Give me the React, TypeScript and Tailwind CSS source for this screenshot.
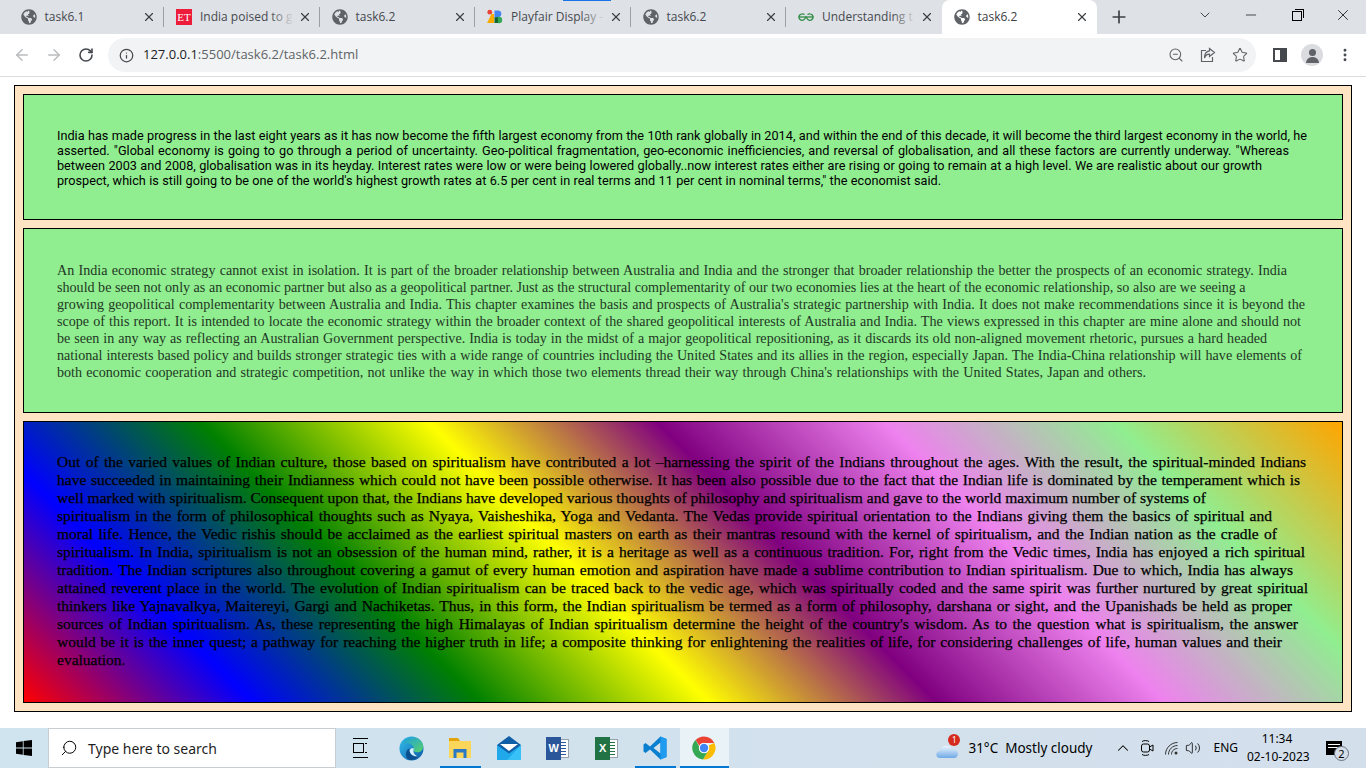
import { FaGlobeAmericas } from "react-icons/fa"
import {
  ArrowLeft,
  ArrowRight,
  ChevronDown,
  ChevronUp,
  Info,
  Minus,
  MoreVertical,
  Plus,
  RotateCw,
  Search,
  Star,
  Volume2,
  X,
  ZoomOut,
} from "lucide-react"

// each line keeps the width it has in the page so the breaks and word positions hold
const first = [
  { w: "w-[1250px]", text: "India has made progress in the last eight years as it has now become the fifth largest economy from the 10th rank globally in 2014, and within the end of this decade, it will become the third largest economy in the world, he" },
  { w: "w-[1232px]", text: "asserted. \"Global economy is going to go through a period of uncertainty. Geo-political fragmentation, geo-economic inefficiencies, and reversal of globalisation, and all these factors are currently underway. \"Whereas" },
  { w: "w-[1205px]", text: "between 2003 and 2008, globalisation was in its heyday. Interest rates were low or were being lowered globally..now interest rates either are rising or going to remain at a high level. We are realistic about our growth" },
  { w: "w-[884px]", text: "prospect, which is still going to be one of the world's highest growth rates at 6.5 per cent in real terms and 11 per cent in nominal terms,\" the economist said." },
]

const second = [
  { w: "w-[1230px]", text: "An India economic strategy cannot exist in isolation. It is part of the broader relationship between Australia and India and the stronger that broader relationship the better the prospects of an economic strategy. India" },
  { w: "w-[1181px]", text: "should be seen not only as an economic partner but also as a geopolitical partner. Just as the structural complementarity of our two economies lies at the heart of the economic relationship, so also are we seeing a" },
  { w: "w-[1248px]", text: "growing geopolitical complementarity between Australia and India. This chapter examines the basis and prospects of Australia's strategic partnership with India. It does not make recommendations since it is beyond the" },
  { w: "w-[1244px]", text: "scope of this report. It is intended to locate the economic strategy within the broader context of the shared geopolitical interests of Australia and India. The views expressed in this chapter are mine alone and should not" },
  { w: "w-[1210px]", text: "be seen in any way as reflecting an Australian Government perspective. India is today in the midst of a major geopolitical repositioning, as it discards its old non-aligned movement rhetoric, pursues a hard headed" },
  { w: "w-[1245px]", text: "national interests based policy and builds stronger strategic ties with a wide range of countries including the United States and its allies in the region, especially Japan. The India-China relationship will have elements of" },
  { w: "w-[1089px]", text: "both economic cooperation and strategic competition, not unlike the way in which those two elements thread their way through China's relationships with the United States, Japan and others." },
]

const third = [
  { w: "w-[1249px]", text: "Out of the varied values of Indian culture, those based on spiritualism have contributed a lot –harnessing the spirit of the Indians throughout the ages. With the result, the spiritual-minded Indians" },
  { w: "w-[1243px]", text: "have succeeded in maintaining their Indianness which could not have been possible otherwise. It has been also possible due to the fact that the Indian life is dominated by the temperament which is" },
  { w: "w-[1149px]", text: "well marked with spiritualism. Consequent upon that, the Indians have developed various thoughts of philosophy and spiritualism and gave to the world maximum number of systems of" },
  { w: "w-[1215px]", text: "spiritualism in the form of philosophical thoughts such as Nyaya, Vaisheshika, Yoga and Vedanta. The Vedas provide spiritual orientation to the Indians giving them the basics of spiritual and" },
  { w: "w-[1220px]", text: "moral life. Hence, the Vedic rishis should be acclaimed as the earliest spiritual masters on earth as their mantras resound with the kernel of spiritualism, and the Indian nation as the cradle of" },
  { w: "w-[1248px]", text: "spiritualism. In India, spiritualism is not an obsession of the human mind, rather, it is a heritage as well as a continuous tradition. For, right from the Vedic times, India has enjoyed a rich spiritual" },
  { w: "w-[1236px]", text: "tradition. The Indian scriptures also throughout covering a gamut of every human emotion and aspiration have made a sublime contribution to Indian spiritualism. Due to which, India has always" },
  { w: "w-[1251px]", text: "attained reverent place in the world. The evolution of Indian spiritualism can be traced back to the vedic age, which was spiritually coded and the same spirit was further nurtured by great spiritual" },
  { w: "w-[1235px]", text: "thinkers like Yajnavalkya, Maitereyi, Gargi and Nachiketas. Thus, in this form, the Indian spiritualism be termed as a form of philosophy, darshana or sight, and the Upanishads be held as proper" },
  { w: "w-[1241px]", text: "sources of Indian spiritualism. As, these representing the high Himalayas of Indian spiritualism determine the height of the country's wisdom. As to the question what is spiritualism, the answer" },
  { w: "w-[1225px]", text: "would be it is the inner quest; a pathway for reaching the higher truth in life; a composite thinking for enlightening the realities of life, for considering challenges of life, human values and their" },
  { w: "w-[70px]", text: "evaluation." },
]

const tabs = [
  { title: "task6.1", icon: "globe" },
  { title: "India poised to g", icon: "et" },
  { title: "task6.2", icon: "globe" },
  { title: "Playfair Display -", icon: "gf" },
  { title: "task6.2", icon: "globe" },
  { title: "Understanding t", icon: "gfg" },
  { title: "task6.2", icon: "globe", active: true },
]

function Lines({ lines }: { lines: { w: string; text: string }[] }) {
  return (
    <>
      {lines.map((line, i) => (
        <div key={i} className={`${line.w} whitespace-nowrap [text-align-last:justify]`}>
          {line.text}
        </div>
      ))}
    </>
  )
}

function TabIcon({ icon }: { icon: string }) {
  if (icon === "et") {
    return (
      <div className="w-4 h-4 bg-[#ed1c3a] text-white flex items-center justify-center text-[11px] leading-none font-['Liberation_Serif',serif]">
        ET
      </div>
    )
  }
  if (icon === "gf") {
    return (
      <svg width="16" height="16" viewBox="0 0 16 16">
        <path d="M0 14 L4.5 5 L7 5 V14 Z" fill="#f9ab00" />
        <circle cx="2.8" cy="3.2" r="2.4" fill="#ea4335" />
        <path d="M7.5 1.5 H11.5 A3.4 3.4 0 0 1 11.5 8.2 H7.5 Z" fill="#4285f4" />
        <circle cx="12" cy="11" r="3.2" fill="#34a853" />
        <rect x="7.5" y="8.2" width="3.4" height="5.8" fill="#0d652d" />
      </svg>
    )
  }
  if (icon === "gfg") {
    return (
      <svg width="16" height="16" viewBox="0 0 16 16" fill="none" stroke="#2f8d46" strokeWidth="1.3">
        <path d="M0.5 8 H15.5" />
        <path d="M6.5 5.6 C5.5 4.8 4.4 4.7 3.5 5 C1.8 5.5 1 6.8 1 8 C1 10 2.5 11.5 4.5 11.3 C6 11 7 10 8 8 C9 10 10 11 11.5 11.3 C13.5 11.5 15 10 15 8 C15 6.8 14.2 5.5 12.5 5 C11.6 4.7 10.5 4.8 9.5 5.6" />
      </svg>
    )
  }
  return <FaGlobeAmericas className="w-4 h-4 text-[#5f6368]" />
}

function WinIcon() {
  return (
    <svg width="16" height="16" viewBox="0 0 16 16" fill="#000">
      <path d="M0 2.2 L6.8 1.2 V7.5 H0 Z M7.6 1.1 L16 0 V7.5 H7.6 Z M0 8.4 H6.8 V14.8 L0 13.8 Z M7.6 8.4 H16 V16 L7.6 14.9 Z" />
    </svg>
  )
}

function Edge() {
  return (
    <svg width="25" height="25" viewBox="0 0 26 26">
      <defs>
        <linearGradient id="edgeA" x1="0" y1="0" x2="1" y2="1">
          <stop offset="0" stopColor="#35c1f1" />
          <stop offset="1" stopColor="#0c59a4" />
        </linearGradient>
        <linearGradient id="edgeB" x1="0" y1="0" x2="1" y2="1">
          <stop offset="0" stopColor="#1b9de2" />
          <stop offset="1" stopColor="#5ad36a" />
        </linearGradient>
      </defs>
      <circle cx="13" cy="13" r="12.5" fill="url(#edgeA)" />
      <path d="M3 9 C6 0 20 -2 24.5 8 C26.5 13 23 17 19 17 C15 17 14.5 15 15.5 13 C15.5 9 8 5 3 9 Z" fill="url(#edgeB)" />
      <path d="M11 13 C10 18 14 22 20 21 C17 25 12 26 9 24 C6 20 7 14 11 13 Z" fill="#0b4f8f" />
      <path d="M15.5 13 C12 12 10 15 12 18 C14 21 17 21.5 20 21 C16 20.5 14 17 15.5 13 Z" fill="#d7eefb" />
    </svg>
  )
}

function Folder() {
  return (
    <svg width="22" height="22" viewBox="0 0 22 22">
      <path d="M0 1 H9 L11 4 H22 V21 H0 Z" fill="#e2a30b" />
      <rect x="0" y="4" width="22" height="17" fill="#fbd65a" />
      <path d="M4.5 12 H17.5 V21 H14.5 V15.5 H7.5 V21 H4.5 Z" fill="#2b78c5" />
    </svg>
  )
}

function Mail() {
  return (
    <svg width="24" height="24" viewBox="0 0 24 24">
      <path d="M12 0 L24 9 V24 H0 V9 Z" fill="#0f5ea6" />
      <path d="M3 8 H21 L12 15 Z" fill="#fff" />
      <path d="M0 9 L12 17.5 L24 9 V24 H0 Z" fill="#1fa8ea" />
      <path d="M24 9 V24 H10 Z" fill="#37c1f6" />
    </svg>
  )
}

function Office({ dark, mid, letter }: { dark: string; mid: string; letter: string }) {
  return (
    <div className="relative w-[23px] h-[23px]">
      <div className="absolute right-0 top-[2px] bottom-[2px] w-[14px] bg-white border border-gray-400 flex flex-col justify-center gap-[2px] px-[2px]">
        <div className={`h-[1px] ${mid}`} />
        <div className={`h-[1px] ${mid}`} />
        <div className={`h-[1px] ${mid}`} />
        <div className={`h-[1px] ${mid}`} />
        <div className={`h-[1px] ${mid}`} />
      </div>
      <div className={`absolute left-0 top-0 bottom-0 w-[15px] ${dark} text-white text-[11px] font-bold flex items-center justify-center font-['Liberation_Sans',sans-serif]`}>
        {letter}
      </div>
    </div>
  )
}

function VsCode() {
  return (
    <svg width="24" height="24" viewBox="0 0 24 24">
      <path d="M17.5 0.5 L23.5 3 V21 L17.5 23.5 L7 13.5 L2.5 17 L0.5 15.5 V8.5 L2.5 7 L7 10.5 Z M17.5 6.5 L10.5 12 L17.5 17.5 Z" fill="#0a7fd0" />
      <path d="M17.5 0.5 L23.5 3 V21 L17.5 23.5 Z" fill="#1f9cf0" />
    </svg>
  )
}

function ChromeLogo() {
  return (
    <svg width="24" height="24" viewBox="0 0 24 24">
      <path d="M12 0.5 A11.5 11.5 0 0 1 22.3 7 H12 A5 5 0 0 0 7.5 10 L3.6 4 A11.5 11.5 0 0 1 12 0.5 Z" fill="#ea4335" />
      <path d="M22.3 7 A11.5 11.5 0 0 1 11 23.5 L16 15 A5 5 0 0 0 16.5 9.5 Z" fill="#fbbc04" />
      <path d="M3.6 4 L8 12 A4.5 4.5 0 0 0 16 15 L11 23.5 A11.5 11.5 0 0 1 3.6 4 Z" fill="#34a853" />
      <circle cx="12" cy="12" r="5.2" fill="#fff" />
      <circle cx="12" cy="12" r="4.2" fill="#4285f4" />
    </svg>
  )
}

function TaskButton({ children, bar, active }: { children: React.ReactNode; bar?: boolean; active?: boolean }) {
  return (
    <div className={`relative w-[48.8px] h-10 flex items-center justify-center ${active ? "bg-[#e9f2f7]" : ""}`}>
      {children}
      {bar && <div className={`absolute bottom-0 h-[2px] bg-[#0078d4] ${active ? "inset-x-0" : "inset-x-[4px]"}`} />}
    </div>
  )
}

export default function App() {
  return (
    <div className="h-screen w-[1366px] flex flex-col overflow-hidden bg-white font-['Open_Sans',sans-serif]">
      <div className="relative h-[34px] bg-[#dee1e6] flex items-end pl-[8.5px] shrink-0">
        <div className="absolute top-0 left-[563px] w-[48px] h-[1px] bg-[#1a73e8]" />
        {tabs.map((tab, i) => (
          <div
            key={i}
            className={`relative w-[155.5px] h-[34px] flex items-center pl-[12px] pr-[8px] text-[12px] ${
              tab.active ? "bg-white rounded-t-lg text-[#3c4043]" : "text-[#45494e]"
            } ${i < 5 ? "after:absolute after:right-0 after:top-[7px] after:h-[20px] after:w-px after:bg-[#9aa0a6]" : ""}`}
          >
            <TabIcon icon={tab.icon} />
            <div className="relative ml-2 flex-1 whitespace-nowrap">
              {tab.title}
              {tab.title.length > 10 && (
                <div className="absolute inset-y-0 right-0 w-6 bg-gradient-to-r from-transparent to-[#dee1e6]" />
              )}
            </div>
            <X className="w-[14px] h-[14px] ml-1 text-[#3c4043]" strokeWidth={2} />
          </div>
        ))}
        <div className="ml-[12px] h-[34px] flex items-center">
          <Plus className="w-5 h-5 text-[#3c4043]" strokeWidth={2} />
        </div>
        <div className="ml-auto h-[30px] self-start flex items-center text-[#202124]">
          <div className="w-[46px] flex justify-center">
            <ChevronDown className="w-4 h-4" strokeWidth={1.2} />
          </div>
          <div className="w-[46px] flex justify-center">
            <Minus className="w-4 h-4" strokeWidth={1.2} />
          </div>
          <div className="w-[46px] flex justify-center">
            <div className="relative w-[10px] h-[10px] border border-black mt-[2px]">
              <div className="absolute -top-[3px] -right-[3px] w-[9px] h-[9px] border-t border-r border-black" />
            </div>
          </div>
          <div className="w-[46px] flex justify-center">
            <X className="w-[18px] h-[18px]" strokeWidth={1.2} />
          </div>
        </div>
      </div>

      <div className="h-[43px] shrink-0 flex items-center border-b border-[#dadce0] bg-white">
        <div className="w-[108px] flex items-center text-[#5f6368]">
          <ArrowLeft className="w-[18px] h-[18px] ml-[13px] text-[#babcbe]" strokeWidth={2} />
          <ArrowRight className="w-[18px] h-[18px] ml-[14px] text-[#babcbe]" strokeWidth={2} />
          <RotateCw className="w-4 h-4 ml-[15px] text-[#45494e]" strokeWidth={2.4} />
        </div>
        <div className="w-[1148px] h-[34px] rounded-full bg-[#f1f3f4] flex items-center pl-[11px] pr-[8px]">
          <Info className="w-[15px] h-[15px] text-[#45494e]" strokeWidth={2} />
          <div className="ml-[9px] text-[13px] text-[#5f6368]">
            <span className="text-[#202124]">127.0.0.1</span>:5500/task6.2/task6.2.html
          </div>
          <div className="ml-auto flex items-center gap-[16px] text-[#5f6368]">
            <ZoomOut className="w-4 h-4" strokeWidth={1.6} />
            <svg width="16" height="16" viewBox="0 0 16 16" fill="none" stroke="currentColor" strokeWidth="1.2">
              <path d="M6 3.5 H1.5 V14.5 H12.5 V10" />
              <path d="M9.5 1.5 L14.5 5.5 L9.5 9.5 V7.2 C7 7.2 5.5 8.5 4.5 11 C4.5 7 6.5 4.2 9.5 3.8 Z" />
            </svg>
            <Star className="w-4 h-4" strokeWidth={1.6} />
          </div>
        </div>
        <div className="flex-1 flex items-center text-[#45494e]">
          <div className="ml-[17px] w-[14px] h-[14px] border-2 border-[#45494e] flex justify-end">
            <div className="w-[5px] h-full bg-[#45494e]" />
          </div>
          <div className="ml-[14px] w-[22px] h-[22px] rounded-full bg-[#dadce0] overflow-hidden flex flex-col items-center pt-[5px]">
            <div className="w-[7px] h-[7px] rounded-full bg-[#5f6368]" />
            <div className="w-[13px] h-[6px] rounded-t-full bg-[#5f6368] mt-[1px]" />
          </div>
          <MoreVertical className="w-4 h-4 ml-[14px]" strokeWidth={2.4} />
        </div>
      </div>

      <div className="flex-1 px-[14px] pt-2">
        <div className="border border-black bg-[#ffe4c4] p-2 flex flex-col gap-2 text-black">
          <div className="border border-black bg-[#90ee90] pt-[33px] pb-[31px] pl-[33px] text-[12.7px] leading-[15px] font-['Roboto',sans-serif]">
            <Lines lines={first} />
          </div>
          <div className="border border-black bg-[#90ee90] pt-[33px] pb-[31px] pl-[33px] text-[14.1px] leading-[17px] text-[#1f3824] font-['Liberation_Serif',serif]">
            <Lines lines={second} />
          </div>
          <div className="border border-black bg-[linear-gradient(45deg,red,blue,green,yellow,purple,violet,lightgreen,orange)] pt-[31px] pb-[33px] pl-[33px] text-[15.5px] leading-[18px] [-webkit-text-stroke:0.25px_black] font-['Liberation_Serif',serif]">
            <Lines lines={third} />
          </div>
        </div>
      </div>

      <div className="h-10 shrink-0 flex items-center bg-gradient-to-r from-[#cfe4ee] to-[#d4dfec] text-black">
        <div className="w-12 flex justify-center">
          <WinIcon />
        </div>
        <div className="w-[288px] h-10 bg-white border border-[#c8cdd2] flex items-center pl-[11px]">
          <Search className="w-[18px] h-[18px] -scale-x-100" strokeWidth={1.3} />
          <span className="ml-[10px] text-[14px] text-[#1f1f1f] font-['Noto_Sans',sans-serif]">Type here to search</span>
        </div>
        <div className="w-[48px] flex justify-center">
          <div className="w-[15px] h-[20px] border-y border-black flex items-center gap-[1px] justify-center">
            <div className="w-[11px] h-[10px] border border-black" />
            <div className="w-[2px] h-[10px] border-y border-black" />
          </div>
        </div>
        <div className="flex ml-[3px]">
          <TaskButton>
            <Edge />
          </TaskButton>
          <TaskButton bar>
            <Folder />
          </TaskButton>
          <TaskButton>
            <Mail />
          </TaskButton>
          <TaskButton>
            <Office dark="bg-[#2b579a]" mid="bg-[#2b579a]" letter="W" />
          </TaskButton>
          <TaskButton>
            <Office dark="bg-[#217346]" mid="bg-[#217346]" letter="X" />
          </TaskButton>
          <TaskButton bar>
            <VsCode />
          </TaskButton>
          <TaskButton bar active>
            <ChromeLogo />
          </TaskButton>
        </div>

        <div className="ml-auto flex items-center text-[13.5px] font-['Noto_Sans',sans-serif]">
          <div className="relative w-6 h-6 mr-[8px]">
            <svg width="24" height="24" viewBox="0 0 24 24">
              <defs>
                <linearGradient id="cloud" x1="0" y1="0" x2="0" y2="1">
                  <stop offset="0" stopColor="#eef6fd" />
                  <stop offset="1" stopColor="#6fa9e6" />
                </linearGradient>
              </defs>
              <path d="M4 22 C-1 22 -1 15 4 15 C5 9 14 8 16 13 C23 12 24 22 18 22 Z" fill="url(#cloud)" />
            </svg>
            <div className="absolute -top-[2px] right-0 w-3 h-3 rounded-full bg-[#d42b1e] text-white text-[8px] leading-3 text-center">1</div>
          </div>
          <span>31°C</span>
          <span className="ml-[7px]">Mostly cloudy</span>
          <ChevronUp className="w-[18px] h-[18px] ml-[22px]" strokeWidth={1.4} />
          <svg className="ml-[8px]" width="14" height="18" viewBox="0 0 14 18" fill="none" stroke="#000" strokeWidth="1">
            <rect x="1.5" y="5" width="8" height="8" rx="2" />
            <path d="M9.5 8 L13 6 V12 L9.5 10" />
            <path d="M2 2.5 C4 1.3 7 1.3 9 2.5 M2 15.5 C4 16.7 7 16.7 9 15.5" />
          </svg>
          <svg className="ml-[10px]" width="16" height="16" viewBox="0 0 16 16" fill="none" stroke="#333" strokeWidth="1">
            <path d="M1.5 14.5 C1.5 8 7 2.5 13.5 2.5" />
            <path d="M4.5 14.5 C4.5 9.5 8.5 5.5 13.5 5.5" />
            <path d="M7.5 14.5 C7.5 11 10 8.5 13.5 8.5" />
            <circle cx="12" cy="13" r="1.5" fill="#333" stroke="none" />
          </svg>
          <Volume2 className="w-4 h-4 ml-[5px]" strokeWidth={1.2} />
          <span className="ml-[12px] text-[12px]">ENG</span>
          <div className="ml-[9px] w-[60px] text-center text-[12px] leading-[18px] whitespace-nowrap">
            <div>11:34</div>
            <div>02-10-2023</div>
          </div>
          <div className="relative ml-[19px] mr-[24px] w-4 h-[14px] bg-black flex flex-col gap-[2px] px-[2px] pt-[3px]">
            <div className="h-px bg-white" />
            <div className="h-px bg-white" />
            <div className="absolute -bottom-[6px] -right-[7px] w-[15px] h-[15px] rounded-full bg-[#d5dde8] border border-gray-500 text-[11px] leading-[13px] text-center">2</div>
          </div>
        </div>
      </div>
    </div>
  )
}
